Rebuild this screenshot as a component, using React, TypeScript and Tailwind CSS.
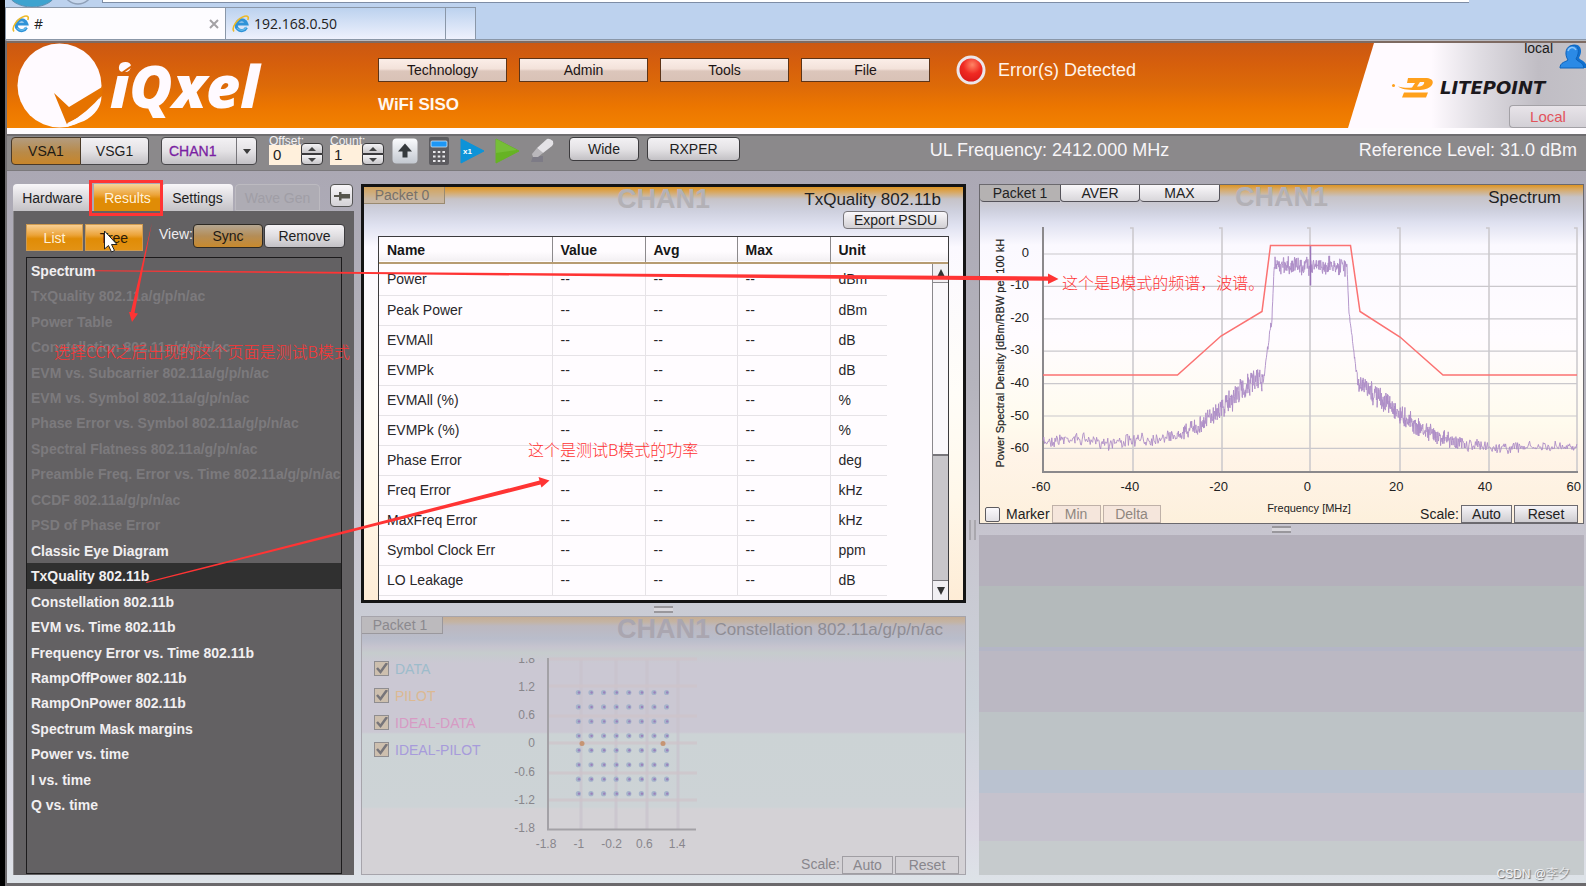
import type { ReactNode } from 'react';

const RESULTS = [
  { name: 'Spectrum', enabled: true },
  { name: 'TxQuality 802.11a/g/p/n/ac', enabled: false },
  { name: 'Power Table', enabled: false },
  { name: 'Constellation 802.11a/g/p/n/ac', enabled: false },
  { name: 'EVM vs. Subcarrier 802.11a/g/p/n/ac', enabled: false },
  { name: 'EVM vs. Symbol 802.11a/g/p/n/ac', enabled: false },
  { name: 'Phase Error vs. Symbol 802.11a/g/p/n/ac', enabled: false },
  { name: 'Spectral Flatness 802.11a/g/p/n/ac', enabled: false },
  { name: 'Preamble Freq. Error vs. Time 802.11a/g/p/n/ac', enabled: false },
  { name: 'CCDF 802.11a/g/p/n/ac', enabled: false },
  { name: 'PSD of Phase Error', enabled: false },
  { name: 'Classic Eye Diagram', enabled: true },
  { name: 'TxQuality 802.11b', enabled: true, selected: true },
  { name: 'Constellation 802.11b', enabled: true },
  { name: 'EVM vs. Time 802.11b', enabled: true },
  { name: 'Frequency Error vs. Time 802.11b', enabled: true },
  { name: 'RampOffPower 802.11b', enabled: true },
  { name: 'RampOnPower 802.11b', enabled: true },
  { name: 'Spectrum Mask margins', enabled: true },
  { name: 'Power vs. time', enabled: true },
  { name: 'I vs. time', enabled: true },
  { name: 'Q vs. time', enabled: true },
];

const MEASUREMENTS = [
  ['Power', 'dBm'],
  ['Peak Power', 'dBm'],
  ['EVMAll', 'dB'],
  ['EVMPk', 'dB'],
  ['EVMAll (%)', '%'],
  ['EVMPk (%)', '%'],
  ['Phase Error', 'deg'],
  ['Freq Error', 'kHz'],
  ['MaxFreq Error', 'kHz'],
  ['Symbol Clock Err', 'ppm'],
  ['LO Leakage', 'dB'],
];

const LEGEND = [
  { id: 'data', label: 'DATA', color: 'text-[#9dbccb]' },
  { id: 'pilot', label: 'PILOT', color: 'text-[#dcb992]' },
  { id: 'ideal-data', label: 'IDEAL-DATA', color: 'text-[#d79ac4]' },
  { id: 'ideal-pilot', label: 'IDEAL-PILOT', color: 'text-[#a79bdb]' },
];

// [x, y, noise] points of the trace envelope in chart units
const ENVELOPE = [
  [1043, 441, 6], [1075, 438, 5], [1110, 442, 6], [1150, 439, 5], [1177, 435, 5],
  [1200, 425, 8], [1222, 407, 9], [1240, 391, 11], [1250, 382, 11], [1262, 381, 11],
  [1264, 376, 2], [1268, 346, 3], [1272, 318, 3], [1274, 270, 1], [1275, 265, 8],
  [1310, 265, 8], [1346, 265, 8], [1347, 265, 1], [1349, 312, 1], [1353, 344, 3],
  [1358, 382, 3], [1360, 385, 8], [1380, 397, 10], [1400, 413, 9], [1420, 428, 8],
  [1443, 437, 7], [1465, 445, 6], [1500, 447, 5], [1577, 447, 5],
];

function buildTrace() {
  let seed = 7;
  const rand = () => {
    seed = (seed * 16807) % 2147483647;
    return seed / 2147483647;
  };
  const points: string[] = [];
  for (let i = 0; i < ENVELOPE.length - 1; i++) {
    const [x0, y0, n0] = ENVELOPE[i];
    const [x1, y1, n1] = ENVELOPE[i + 1];
    // the carrier and its skirts are sampled more densely than the noise floor
    const step = x0 >= 1177 && x0 < 1465 ? 0.35 : 0.8;
    for (let x = x0; x < x1; x += step) {
      const t = (x - x0) / (x1 - x0);
      const noise = (rand() + rand() - 1) * (n0 + (n1 - n0) * t) * 1.4;
      points.push(`${x.toFixed(1)},${(y0 + (y1 - y0) * t + noise).toFixed(1)}`);
    }
  }
  return points.join(' ');
}

const TRACE = buildTrace();

function IeIcon() {
  return (
    <svg className="size-[18px] shrink-0" viewBox="0 0 18 18" fill="none">
      <path d="M14.4 12.6A5.4 5.4 0 1 1 14.800 9H4.800" stroke="#2f93d8" strokeWidth="3.200" />
      <path d="M14.5 11.8A5.6 5.6 0 0 1 5 13" stroke="#6cc0ee" strokeWidth="1.2" />
      <path d="M2 16.5C-1 13 5 3.500 12.500 1.200C16 .4 17 2 15.800 5" stroke="#edb927" strokeWidth="1.6" />
    </svg>
  );
}

function BrowserBar() {
  return (
    <div className="border-b border-[#8a97a8] bg-[#bdd2ee]">
      <div className="flex h-[7px] items-start">
        <svg className="h-[7px] w-[97px]" viewBox="0 0 97 7">
          <ellipse cx="27" cy="-8" rx="24" ry="15" fill="#3ea3cf" stroke="#5f8fb0" />
          <ellipse cx="73" cy="-7" rx="13" ry="11" fill="#c8d8ee" stroke="#8fa0b8" strokeWidth="1.5" />
        </svg>
        <div className="mr-[117px] h-[3px] grow border-b border-l border-[#7e8da5] bg-white" />
      </div>
      <div className="flex h-8 font-['Open_Sans','Noto_Sans',sans-serif] text-sm text-[#222]">
        <div className="flex w-[221px] items-center gap-1 border-x border-t border-[#8a97a8] bg-[#fdfcff] pr-0.5 pl-1.5">
          <IeIcon />
          <span>#</span>
          <button aria-label="Close tab" className="ml-auto p-1">
            <svg className="size-[10px]" viewBox="0 0 10 10" stroke="#a3a1a5" strokeWidth="2">
              <path d="M1 1 9 9M9 1 1 9" />
            </svg>
          </button>
        </div>
        <div className="flex w-[220px] items-center gap-1 border-t border-r border-[#8a97a8] bg-linear-to-b from-[#bcd2ee] to-[#eef1fd] pl-1.5">
          <IeIcon />
          <span>192.168.0.50</span>
        </div>
        <div className="w-[30px] border-t border-r border-[#8a97a8] bg-linear-to-b from-[#bcd2ee] to-[#eef1fd]" />
      </div>
    </div>
  );
}

function Header() {
  return (
    <header className="flex h-[87px] border-t-2 border-[#7d6a62] bg-[linear-gradient(to_bottom,#cb5812,#d65f0c_25%,#dd6a08_50%,#ec7600_75%,#f38200)]">
      <svg className="h-[85px] w-[371px] shrink-0" viewBox="7 43 371 85">
        <circle cx="59.500" cy="85.500" r="42" fill="#fffaff" />
        <path d="M54 93 69 107 103 86.500 102 95Q88 112 67 124.500Z" fill="#e67300" />
        <path d="M67 127 67.500 123Q90 113 101.500 96 101 112 84 121Z" fill="#fffaff" />
        <text x="110" y="108" fontSize="59" fontWeight="800" fontStyle="italic" fill="#fffaff" fontFamily="'Open Sans','Noto Sans',sans-serif">
          iQxel
        </text>
        <path d="M119 75 132 66" stroke="#d96408" strokeWidth="2" />
      </svg>
      <div className="pt-3">
        <div className="flex h-[30px] items-center gap-3">
          {['Technology', 'Admin', 'Tools', 'File'].map((item) => (
            <button
              key={item}
              className="h-6 w-[129px] border border-[#5c3418] bg-[linear-gradient(to_bottom,#fbeee8_0%,#f3e2da_45%,#dcc6bb_55%,#d9c2b6_100%)] text-sm text-[#1c1414]"
            >
              {item}
            </button>
          ))}
          <svg className="ml-3.5 size-[30px]" viewBox="0 0 30 30">
            <defs>
              <radialGradient id="led" cx=".55" cy=".3" r=".7">
                <stop offset="0" stopColor="#ff8565" />
                <stop offset=".5" stopColor="#f02a22" />
                <stop offset="1" stopColor="#d81818" />
              </radialGradient>
            </defs>
            <circle cx="15" cy="15" r="13" fill="url(#led)" stroke="#ece6ea" strokeWidth="3" />
          </svg>
          <span className="text-lg whitespace-nowrap text-[#fff3ea]">Error(s) Detected</span>
        </div>
        <p className="mt-2 text-[17px] leading-6 font-bold text-[#fff7f0]">WiFi SISO</p>
      </div>
      <div className="ml-auto flex w-[238px] shrink-0 flex-col bg-[linear-gradient(to_right,#fffaff_35%,#e0dde3_55%,#c0bdc4_80%,#c4c2c8)] [clip-path:polygon(26px_0,100%_0,100%_100%,0_100%)]">
        <div className="flex h-[27px] justify-end gap-1.5">
          <span className="text-sm leading-[10px] text-[#1a1a1a]">local</span>
          <svg className="h-[26px] w-[27px]" viewBox="0 0 27 26">
            <path d="M5 25C4 18 9 18 11 16C7 10 8 2 15 1.500C22 1 24 8 20 15C22 18 27 17 28 25Z" fill="#1170cf" />
            <path d="M1 25C1 19 7 19 9 17C5 11 7 3 13 2.500C20 2 21 9 17 16C19 19 24 19 25 25Z" fill="#2b8ae6" stroke="#0f62ba" />
            <path d="M9 8C10 4 15 3 17 7" stroke="#8cc6fb" strokeWidth="1.500" fill="none" />
          </svg>
        </div>
        <div className="flex h-[35px] items-center pl-[43px]">
          <svg className="mr-1.5 h-[22px] w-[43px] shrink-0" viewBox="0 0 43 22">
            <circle cx="2.500" cy="8.500" r="1.500" fill="#ffa01c" />
            <path d="M17 1H34C43 1 43.500 6 39 10C36 12.500 31 13 24 13C16 13 10 12 7 9.500C12 11 18 11 21 10.500L24 6H16Z" fill="#ffa01c" />
            <path d="M29 5H32.500C34 5 33 7.500 31 8.800C29.500 9.800 28 9.500 26 9.500Z" fill="#fbf6fa" />
            <path d="M13 15.500H37L35 20.500H11Z" fill="#ffa01c" />
          </svg>
          <span className="font-['DejaVu_Sans',sans-serif] text-lg font-bold text-[#1b181c] italic">LITEPOINT</span>
        </div>
        <button className="h-[23px] w-[77px] self-end rounded-l-sm border border-r-0 border-[#a3a1a6] bg-linear-to-b from-[#e8e4e9] to-[#d3d0d6] text-[15px] text-[#e2535c]">
          Local
        </button>
      </div>
    </header>
  );
}

function Spinner({ id, label, value }: { id: string; label: string; value: string }) {
  return (
    <div className="flex h-7 items-end">
      <div>
        <label htmlFor={id} className="block h-2 w-8 text-xs leading-[8px] whitespace-nowrap text-[#f4f2f4]">
          {label}
        </label>
        <input id={id} defaultValue={value} className="block h-5 w-8 bg-[#fff0dc] pl-1 text-[15px] text-[#222]" />
      </div>
      <div className="z-10 flex h-[22px] w-[22px] flex-col">
        <button
          aria-label={`${label} up`}
          className="flex h-[11px] items-center justify-center rounded-t-sm border border-[#3a393b] bg-linear-to-b from-[#f4f3f5] to-[#c9c7ca]"
        >
          <svg className="h-1 w-2" viewBox="0 0 8 4"><path d="M0 4 4 0 8 4Z" fill="#444" /></svg>
        </button>
        <button
          aria-label={`${label} down`}
          className="flex h-[11px] items-center justify-center rounded-b-sm border border-[#3a393b] bg-linear-to-b from-[#f4f3f5] to-[#c9c7ca]"
        >
          <svg className="h-1 w-2" viewBox="0 0 8 4"><path d="M0 0 4 4 8 0Z" fill="#444" /></svg>
        </button>
      </div>
    </div>
  );
}

function Toolbar() {
  return (
    <div className="flex h-[37px] items-start border-t-2 border-b border-t-[#6f6d70] border-b-[#7b797c] bg-[#8b898b] pt-px pr-[9px] pl-1">
      <button className="h-7 w-[70px] rounded-l border border-[#4a3a28] bg-[linear-gradient(to_bottom,#b39c80,#b98a48_55%,#c8862a)] text-sm text-[#1e1a14]">
        VSA1
      </button>
      <button className="h-7 w-[68px] rounded-r border border-l-0 border-[#48474a] bg-[linear-gradient(to_bottom,#f3f1f4,#e4e2e5_50%,#c3c1c5)] text-sm text-[#1e1e1e]">
        VSG1
      </button>
      <div className="relative ml-3">
        <select
          aria-label="Channel"
          className="h-7 w-24 appearance-none rounded border border-[#48474a] bg-[linear-gradient(to_bottom,#f3f1f4,#e4e2e5_50%,#c3c1c5)] pl-[7px] text-sm text-[#7a1fa2] [-webkit-text-stroke:0.3px_#7a1fa2]"
        >
          <option>CHAN1</option>
        </select>
        <span className="pointer-events-none absolute inset-y-px right-px flex w-5 items-center justify-center border-l border-[#77757a]">
          <svg className="h-[5px] w-2" viewBox="0 0 8 5"><path d="M0 0 4 5 8 0Z" fill="#3c3c3c" /></svg>
        </span>
      </div>
      <div className="ml-3 flex gap-[7px]">
        <Spinner id="offset" label="Offset:" value="0" />
        <Spinner id="count" label="Count:" value="1" />
      </div>
      <div className="ml-2 flex h-7 items-center gap-2.5">
        <button aria-label="Upload">
          <svg className="size-[26px]" viewBox="0 0 26 26">
            <defs>
              <linearGradient id="up" x1="0" y1="0" x2="0" y2="1">
                <stop offset="0" stopColor="#fbfbfd" />
                <stop offset="1" stopColor="#c3c8d0" />
              </linearGradient>
            </defs>
            <rect x=".5" y=".5" width="25" height="25" rx="4" fill="url(#up)" />
            <path d="M13 5.500 20 13.500H15.500V19.500H10.500V13.500H6Z" fill="#35393c" />
          </svg>
        </button>
        <button aria-label="Calculator">
          <svg className="h-7 w-[22px]" viewBox="0 0 22 28">
            <rect x="1" width="20" height="28" rx="2" fill="#5d5c60" />
            <rect x="3" y="4" width="16" height="6" rx="1" fill="#1d97f5" stroke="#d4e6f5" strokeWidth=".8" />
            {[14, 18.5, 23].map((y) =>
              [5, 9.700, 14.400].map((x) => <rect key={`${x}-${y}`} x={x} y={y} width="2.600" height="2" fill="#e9e9ec" />),
            )}
          </svg>
        </button>
        <button aria-label="Run once">
          <svg className="h-[26px] w-[25px]" viewBox="0 0 25 26">
            <path d="M1 1 24 13 1 25Z" fill="#0d93d8" stroke="#0d93d8" strokeLinejoin="round" />
            <text x="3" y="16" fontSize="8" fontWeight="700" fill="#fff" fontFamily="Liberation Sans, sans-serif">x1</text>
          </svg>
        </button>
        <button aria-label="Run">
          <svg className="h-[26px] w-[25px]" viewBox="0 0 25 26">
            <path d="M1 1 24 13 1 25Z" fill="#66b324" stroke="#66b324" strokeLinejoin="round" />
            <path d="M1 1 22 12 1 15Z" fill="#86c94c" opacity=".5" />
          </svg>
        </button>
        <button aria-label="Clear">
          <svg className="h-[26px] w-[25px]" viewBox="0 0 25 26">
            <path d="M3 18H13V24H1Z" fill="#7d7b86" />
            <path d="M2 16 7 10 13 15 8 19H3Z" fill="#b9b7bb" />
            <path d="M7 10 17 1Q19 0 23 3Q24 6 22 8L13 15Z" fill="#e4e2e6" />
          </svg>
        </button>
      </div>
      <div className="ml-3.5 flex gap-2">
        <button className="h-6 w-[70px] rounded-sm border border-[#3c3b3e] bg-[linear-gradient(to_bottom,#f3f1f4,#e4e2e5_50%,#c3c1c5)] text-sm text-[#1e1e1e]">
          Wide
        </button>
        <button className="h-6 w-[93px] rounded-sm border border-[#3c3b3e] bg-[linear-gradient(to_bottom,#f3f1f4,#e4e2e5_50%,#c3c1c5)] text-sm text-[#1e1e1e]">
          RXPER
        </button>
      </div>
      <p className="grow text-center text-lg leading-[27px] text-[#f7f5f8]">UL Frequency: 2412.000 MHz</p>
      <p className="text-lg leading-[27px] text-[#f7f5f8]">Reference Level: 31.0 dBm</p>
    </div>
  );
}

function ResultsPanel() {
  return (
    <aside className="flex w-[341px] shrink-0 flex-col">
      <div className="flex h-[27px] text-sm text-[#1e1e1e]">
        <button className="w-[79px] rounded-t-sm bg-linear-to-b from-[#f8f6f9] to-[#c4c2c6]">Hardware</button>
        <button className="ml-0.5 w-[67px] bg-[linear-gradient(to_bottom,#f7d59a,#eca43a_40%,#e08c06_55%,#e08c06)] text-[#fff2dc]">Results</button>
        <button className="ml-px w-[71px] rounded-t-sm bg-linear-to-b from-[#f8f6f9] to-[#c4c2c6]">Settings</button>
        <button className="ml-0.5 w-[85px] rounded-t-sm border border-[#bcbac0] bg-[#aeacb4] text-[#a09ea6]" disabled>Wave Gen</button>
        <button aria-label="Pin" className="ml-2.5 flex h-[23px] w-[23px] items-center justify-center rounded-sm border border-[#555] bg-linear-to-b from-[#f8f6f9] to-[#d4d2d6]">
          <svg className="h-2.5 w-4 shrink-0" viewBox="0 0 16 10" fill="#55544c">
            <path d="M0 4H5V1H7.500V3H16V7.500H7.500V9.500H5V6H0Z" />
          </svg>
        </button>
      </div>
      <div className="flex grow flex-col border-l border-[#8a888b] bg-[#636163] pt-[13px] pb-px pl-3">
        <div className="flex text-sm">
          <button className="h-[27px] w-[57px] border border-[#cf9b50] bg-[linear-gradient(to_bottom,#f7cf94,#eca43a_40%,#e08c06_55%,#e39214)] text-[#fff0d8]">List</button>
          <button className="ml-0.5 h-[27px] w-[58px] border border-[#cf9b50] bg-[linear-gradient(to_bottom,#f7cf94,#eca43a_40%,#e08c06_55%,#e39214)] text-[#2c1c08]">Tree</button>
          <span className="ml-4 w-[34px] leading-5 text-[#efedef]">View:</span>
          <button className="h-6 w-[70px] rounded-sm border border-[#2e2a24] bg-[linear-gradient(to_bottom,#b5a793,#b48d57_50%,#c98a2d)] text-[#1e1a14]">Sync</button>
          <button className="ml-px h-6 w-[81px] rounded-sm border border-[#3c3b3e] bg-[linear-gradient(to_bottom,#f5f3f6,#e0dee1_50%,#c3c1c5)] text-[#1e1e1e]">Remove</button>
        </div>
        <div className="mt-1.5 mr-3 grow overflow-hidden border border-[#1c1b1c]">
          <ul className="flex h-[560px] flex-col text-sm font-bold">
            {RESULTS.map((item) => (
              <li
                key={item.name}
                className={`flex flex-1 items-center pl-1 whitespace-nowrap ${item.selected ? 'bg-[#303030]' : ''} ${item.enabled ? 'text-[#f1eff1]' : 'text-[#7c7a7d]'}`}
              >
                {item.name}
              </li>
            ))}
          </ul>
        </div>
      </div>
    </aside>
  );
}

function PanelHeader({ title, faded, children }: { title: string; faded?: boolean; children: ReactNode }) {
  return (
    <div className="grid h-6 shrink-0 grid-cols-[1fr_auto_1fr] whitespace-nowrap">
      <div className="flex h-[17px] text-sm">{children}</div>
      <span className={`text-[27px] leading-6 font-bold ${faded ? 'text-[#aaa6b0]' : 'text-[#b3b1b6]'}`}>CHAN1</span>
      <h2 className={`pr-[22px] text-right text-[17px] leading-[26px] ${faded ? 'text-[#8f8d94]' : 'text-[#1f1f22]'}`}>{title}</h2>
    </div>
  );
}

function TxQualityPanel() {
  return (
    <section className="flex h-[419px] flex-col border-[3px] border-[#141414] bg-[linear-gradient(to_bottom,#dd9422_0px,#d9a860_5px,#c6c3c8_12px,#ced0de_24px,#dfe1f0_38px,#fbf9ff_60px,#fffdf8_50%,#fff8ea_75%,#feecd6)]">
      <PanelHeader title="TxQuality 802.11b">
        <button className="w-[81px] border-r border-b border-[#9a8a70] bg-[#c9ae86]/60 pr-1 leading-[14px] text-[#77716a]">Packet 0</button>
      </PanelHeader>
      <button className="mr-[15px] h-[18px] w-[105px] shrink-0 self-end rounded-sm border border-[#77757a] bg-linear-to-b from-[#faf8fb] to-[#d2d0d4] text-sm leading-[16px] text-[#1e1e1e]">
        Export PSDU
      </button>
      <div className="relative mx-3.5 mt-[7px] grow overflow-hidden border border-b-0 border-[#3c3b3d] bg-[#fffcff]">
        <table className="w-full table-fixed border-collapse text-left text-sm text-[#28272a]">
          <thead>
            <tr className="h-[26px] border-b-2 border-[#b79c72] bg-[linear-gradient(to_bottom,#fffcff_60%,#f3f0f3)] text-[#161616]">
              <th className="w-[173px] border-r border-[#8d8a8d] pl-2">Name</th>
              <th className="w-[93px] border-r border-[#8d8a8d] pl-2">Value</th>
              <th className="w-[92px] border-r border-[#8d8a8d] pl-2">Avg</th>
              <th className="w-[93px] border-r border-[#8d8a8d] pl-2">Max</th>
              <th className="w-[57px] pl-2">Unit</th>
              <th />
            </tr>
          </thead>
          <tbody>
            {MEASUREMENTS.map(([name, unit]) => (
              <tr key={name} className="h-[30px] first:h-8">
                <td className="border-r border-b border-[#e6e3e7] pl-2">{name}</td>
                <td className="border-r border-b border-[#e6e3e7] pl-2">--</td>
                <td className="border-r border-b border-[#e6e3e7] pl-2">--</td>
                <td className="border-r border-b border-[#e6e3e7] pl-2">--</td>
                <td className="border-b border-[#e6e3e7] pl-2">{unit}</td>
                <td />
              </tr>
            ))}
          </tbody>
        </table>
        <div className="absolute top-[27px] right-0 bottom-0 flex w-4 flex-col border-l border-[#8a888c] bg-[#c8c6ca]">
          <button aria-label="Scroll up" className="flex h-[19px] items-center justify-center border-b border-[#8a888c] bg-[#f1eff2]">
            <svg className="size-2" viewBox="0 0 8 8"><path d="M0 8 4 0 8 8Z" fill="#333" /></svg>
          </button>
          <div className="h-[173px] border-b-2 border-[#77757a] bg-[#faf8fb]" />
          <button aria-label="Scroll down" className="mt-auto flex h-5 items-center justify-center border-t border-[#77757a] bg-[#f1eff2]">
            <svg className="size-2" viewBox="0 0 8 8"><path d="M0 0 4 8 8 0Z" fill="#333" /></svg>
          </button>
        </div>
      </div>
    </section>
  );
}

function ConstellationPanel() {
  const steps = [0, 1, 2, 3, 4, 5, 6, 7];
  return (
    <section className="flex grow flex-col border border-[#a6a4ab] bg-[linear-gradient(to_bottom,#c5ad94_0px,#c4b4a4_5px,#bcb8c0_9px,#b9bdcb_22px,#c6c4cf_30px,#c6cccd_36px,#cbc8d3_46px,#cbc8d3_115px,#ccd3d5_117px,#cdd3d6_190px,#d4d2d6_192px)]">
      <PanelHeader title="Constellation 802.11a/g/p/n/ac" faded>
        <button className="w-[81px] border-r border-b border-[#9a989d] bg-[#bcbabd] pr-1 leading-[14px] text-[#8b898e]">Packet 1</button>
      </PanelHeader>
      <div className="flex pt-3.5">
        <ul className="w-[138px] pl-3 text-sm">
          {LEGEND.map((entry) => (
            <li key={entry.id} className="relative flex h-[27px] items-center gap-1.5">
              <input id={entry.id} type="checkbox" defaultChecked className="size-[15px] appearance-none border border-[#8f8d90] bg-[#cdbfae]" />
              <svg className="pointer-events-none absolute left-0.5 size-3" viewBox="0 0 12 12" fill="none" stroke="#77757a" strokeWidth="2.500">
                <path d="M1 5 4.500 9 11 0" />
              </svg>
              <label htmlFor={entry.id} className={entry.color}>{entry.label}</label>
            </li>
          ))}
        </ul>
        <svg className="h-[200px] w-[210px]" viewBox="500 655 210 200" fontFamily="Liberation Sans, sans-serif" fontSize="12" fill="#88868c">
          {[581, 616, 647, 678].map((x) => (
            <path key={x} d={`M${x} 659V829`} stroke="#c9c3cd" strokeWidth="3" opacity=".7" />
          ))}
          {[659, 686, 716, 743, 773, 800].map((y) => (
            <path key={y} d={`M549 ${y}H697`} stroke="#cfc4ca" strokeWidth="3" opacity=".7" />
          ))}
          <path d="M548 658V829.500H696" fill="none" stroke="#a3a1a6" strokeWidth="2" />
          {steps.map((row) =>
            steps.map((col) => (
              <g key={`${row}-${col}`}>
                <circle cx={578.400 + col * 12.600} cy={692.500 + row * 14.450} r="2.600" fill="#a5b3cb" />
                <circle cx={579 + col * 12.600} cy={692.500 + row * 14.450} r="1.200" fill="#9a80bb" />
              </g>
            )),
          )}
          <circle cx="582" cy="743.500" r="2.500" fill="#c69573" />
          <circle cx="663" cy="743.500" r="2.500" fill="#c69573" />
          <svg x="500" y="658" width="40" height="20" viewBox="500 658 40 20">
            <text x="535" y="663" textAnchor="end">1.8</text>
          </svg>
          {['1.2', '0.6', '0', '-0.6', '-1.2', '-1.8'].map((t, i) => (
            <text key={t} x="535" y={691 + i * 28.200} textAnchor="end">{t}</text>
          ))}
          {['-1.8', '-1', '-0.2', '0.6', '1.4'].map((t, i) => (
            <text key={t} x={546 + i * 32.800} y="848" textAnchor="middle">{t}</text>
          ))}
        </svg>
      </div>
      <div className="mt-auto flex justify-end gap-0.5 pr-1.5 text-sm leading-[16px] text-[#88868c]">
        <span>Scale:</span>
        <button className="h-[18px] w-[51px] border border-[#a09ea3] leading-[16px]">Auto</button>
        <button className="h-[18px] w-[64px] border border-[#a09ea3] leading-[16px]">Reset</button>
      </div>
    </section>
  );
}

function SpectrumPanel() {
  return (
    <section className="flex h-[340px] flex-col border border-[#6b696e] bg-[linear-gradient(to_bottom,#dd9422_0px,#d9a860_4px,#c6c3c8_12px,#ced0de_26px,#dfe1f0_38px,#fbf9ff_60px,#fffcff_45%,#fffbee_70%,#fff4e8_80%,#fdf0dc)]">
      <PanelHeader title="Spectrum">
        <button className="w-20 rounded-bl-sm border-b border-[#55535a] bg-[#b5b2b2] leading-[14px] text-[#222]">Packet 1</button>
        <button className="w-20 rounded-b border border-t-0 border-[#55535a] bg-linear-to-b from-[#faf8fb] to-[#d8d6da] leading-[14px] text-[#222]">AVER</button>
        <button className="w-20 rounded-b border border-t-0 border-l-0 border-[#55535a] bg-linear-to-b from-[#faf8fb] to-[#d8d6da] leading-[14px] text-[#222]">MAX</button>
      </PanelHeader>
      <svg className="mt-4 min-h-0 w-full grow overflow-visible" viewBox="980 225 603 279" fill="none" fontFamily="Liberation Sans, sans-serif" fontSize="13">
        {[1133, 1222, 1310, 1400, 1489, 1577].map((x) => (
          <path key={x} d={`M${x - 3} 227.500H${x}V471`} stroke="#cac8cc" strokeWidth="1.500" />
        ))}
        {['0', '-10', '-20', '-30', '-40', '-50', '-60'].map((t, i) => (
          <g key={t}>
            <path d={`M1043 ${253.500 + i * 32.400}H1577`} stroke="#cac8cc" strokeWidth="1.200" />
            <text x="1029" y={256 + i * 32.600} textAnchor="end" fill="#222">{t}</text>
          </g>
        ))}
        <path d="M1043 226.500V471.500H1578" stroke="#8b898c" strokeWidth="2" />
        {['-60', '-40', '-20', '0', '20', '40', '60'].map((t, i) => (
          <text key={t} x={1041 + i * 88.800} y="490" textAnchor="middle" fill="#222">{t}</text>
        ))}
        <text x="1309" y="511" textAnchor="middle" fontSize="11" fill="#222">Frequency [MHz]</text>
        <text transform="translate(1004 467) rotate(-90)" fontSize="11" fill="#222" stroke="#222" strokeWidth=".2">
          Power Spectral Density [dBm/RBW per 100 kH
        </text>
        <polyline points={TRACE} stroke="#ad8cc6" strokeWidth=".9" />
        <path d="M1310.500 245V285" stroke="#9a74b8" strokeWidth="1.500" />
        <path
          d="M1043 374.500H1177.500L1221 335.500 1262 311 1270.500 245H1350.500L1360 311 1400 336.500 1443 374.500H1577"
          stroke="#fb7272"
          strokeWidth="1.500"
        />
      </svg>
      <div className="flex h-[18px] shrink-0 items-center pr-[5px] pl-[5px] text-sm">
        <input id="marker" type="checkbox" className="size-[15px] appearance-none rounded-xs border border-[#5d5b5f] bg-linear-to-b from-[#fbf9fc] to-[#e2e0e4]" />
        <label htmlFor="marker" className="mr-0.5 ml-1.5 text-[#222]">Marker</label>
        <button disabled className="h-[18px] w-[49px] border border-[#bfb1a8] bg-[#f5e6dc] leading-[14px] text-[#8f8780]">Min</button>
        <button disabled className="ml-0.5 h-[18px] w-[58px] border border-[#bfb1a8] bg-[#f5e6dc] leading-[14px] text-[#8f8780]">Delta</button>
        <span className="mr-0.5 ml-auto text-[#222]">Scale:</span>
        <button className="h-[18px] w-[51px] border border-[#6d6b70] bg-linear-to-b from-[#f6f4f7] to-[#cfcdd1] leading-[15px] text-[#222]">Auto</button>
        <button className="ml-0.5 h-[18px] w-[64px] border border-[#6d6b70] bg-linear-to-b from-[#f6f4f7] to-[#cfcdd1] leading-[15px] text-[#222]">Reset</button>
      </div>
    </section>
  );
}

function Grip() {
  return (
    <div className="flex shrink-0 items-center justify-center">
      <div className="h-[7px] w-[19px] border-y-2 border-[#99979c] bg-[#d9d7dc]" />
    </div>
  );
}

// Red hand-drawn notes on top of the whole page
function Annotations() {
  return (
    <div className="pointer-events-none absolute inset-y-0 right-0 -left-[5px] font-['Noto_Sans_CJK_SC',sans-serif] text-base leading-6 font-light whitespace-nowrap text-[#ff3434]">
      <svg className="absolute top-0 left-0 h-[886px] w-[1586px]" viewBox="0 0 1586 886" fill="#ff3434">
        <rect x="90.500" y="181.500" width="71" height="33" fill="none" stroke="#ff3434" strokeWidth="3" />
        <path d="M152 222.500 130.800 312 129 312 132 322 138 313.500 134.500 313Z" />
        <path d="M95 270.200 1048 276.500V273.500L1058.500 279 1048 284V280.800L95 271.200Z" />
        <path d="M146 582 539.500 480.500 538.500 477 549.500 480.500 541.500 487.500 540.500 484.500 146.500 583Z" />
        <path d="M104.500 231V249L108.500 245.500 111.500 252 114.500 250.500 111.500 244.500H117Z" fill="#fff" stroke="#222" />
      </svg>
      <p className="absolute top-[339px] left-[54px]">选择CCK之后出现的这个页面是测试B模式</p>
      <p className="absolute top-[437px] left-[528px]">这个是测试B模式的功率</p>
      <p className="absolute top-[270px] left-[1062px]">这个是B模式的频谱，波谱。</p>
      <p className="absolute right-4 bottom-1 font-['Liberation_Sans','Noto_Sans_CJK_SC',sans-serif] text-xs text-[#f4f4f6] [text-shadow:1px_1px_1px_#666]">
        CSDN @李夕
      </p>
    </div>
  );
}

export default function App() {
  return (
    <div className="relative flex min-h-screen min-w-[1280px] flex-col overflow-hidden border-l-[5px] border-black bg-white font-['Liberation_Sans',Arial,sans-serif]">
      <BrowserBar />
      <div className="flex grow flex-col border-t border-l-2 border-t-[#b9bac0] border-l-[#6f6d70]">
        <Header />
        <div className="h-1.5 bg-[#fffcff]" />
        <Toolbar />
        <main className="flex grow border-b-[3px] border-[#6b696c] bg-[linear-gradient(to_bottom,#aba8b4,#b5b4bd_30%,#c8c6d0_52%,#ccd3da_75%,#dcd9e4_92%,#dde3e8)] pt-[13px] pr-0.5 pb-2 pl-1.5">
          <ResultsPanel />
          <div className="ml-[7px] grid grow grid-cols-[1fr_13px_1fr]">
            <div className="flex flex-col">
              <TxQualityPanel />
              <div className="grid h-[13px] shrink-0"><Grip /></div>
              <ConstellationPanel />
            </div>
            <div className="flex items-center justify-center">
              <div className="h-5 w-[7px] border-x-2 border-[#a9a7ad] bg-[#c5c3ca]" />
            </div>
            <div className="flex flex-col">
              <SpectrumPanel />
              <div className="grid h-[11px] shrink-0"><Grip /></div>
              <div className="grow bg-[linear-gradient(to_bottom,#b4b0bb_15%,#b4babb_15%,#b4babb_33%,#b4b6c6_33%,#b4b6c6_34%,#bbb8c3_34%,#bbb8c3_52%,#bdc3c6_52%,#bdc3c6_69%,#bac2d0_69%,#bac2d0_76%,#c5c2cd_76%,#c5c2cd_90%,#c6cbcd_90%)]" />
            </div>
          </div>
        </main>
      </div>
      <Annotations />
    </div>
  );
}
